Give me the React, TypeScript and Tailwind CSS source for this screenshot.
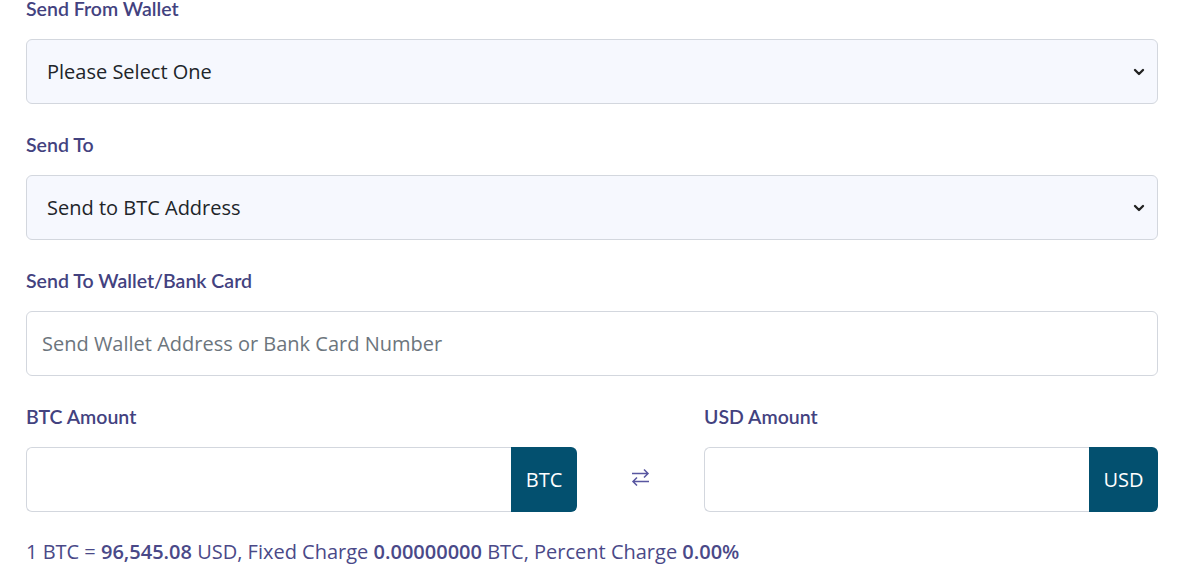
import { ChevronDown } from 'lucide-react';
import type { ReactNode } from 'react';

const label = 'block text-[19.5px] font-semibold text-[#43427f] leading-6 font-["Lato",sans-serif]';
const field = 'h-[65px] w-full rounded-md border border-[#d3d7de] px-5 text-[20px] font-["Open_Sans",sans-serif]';

function Field({ title, children, top }: { title: string; children: ReactNode; top?: string }) {
  return (
    <div className={top}>
      <label className={label}>{title}</label>
      <div className="mt-[18px]">{children}</div>
    </div>
  );
}

function Select({ value }: { value: string }) {
  return (
    <div className={`${field} flex items-center justify-between bg-[#f6f8fe] text-[#212529]`}>
      <span>{value}</span>
      <ChevronDown className="size-4 -mr-[10px] text-[#222]" strokeWidth={3.5} />
    </div>
  );
}

function Amount({ unit, addon }: { unit: string; addon: string }) {
  return (
    <div className="flex h-[65px]">
      <div className="flex-1 rounded-l-md border border-r-0 border-[#d3d7de] bg-white" />
      <div
        className={`${addon} flex items-center justify-center rounded-r-md bg-[#03506f] text-[20px] text-white font-["Open_Sans",sans-serif]`}
      >
        {unit}
      </div>
    </div>
  );
}

function Swap() {
  return (
    <svg width="19" height="18" viewBox="0 0 19 18" fill="none" stroke="#5856a0" strokeWidth="1.5">
      <path d="M1 5.5h16M13 1.5l4 4-4 4" />
      <path d="M18 13.5H2M6 9.5l-4 4 4 4" />
    </svg>
  );
}

export default function App() {
  return (
    <div className="min-h-screen bg-white px-[26px] pr-[31px] -mt-[3px]">
      <Field title="Send From Wallet">
        <Select value="Please Select One" />
      </Field>
      <Field title="Send To" top="mt-[29px]">
        <Select value="Send to BTC Address" />
      </Field>
      <Field title="Send To Wallet/Bank Card" top="mt-[29px]">
        <div className={`${field} flex items-center px-[15px] bg-white text-[#6c757d]`}>
          Send Wallet Address or Bank Card Number
        </div>
      </Field>
      <div className="mt-[29px] grid grid-cols-[551px_1fr_454px]">
        <Field title="BTC Amount">
          <Amount unit="BTC" addon="w-[66px]" />
        </Field>
        <div className="flex items-end justify-center pb-[26px]">
          <Swap />
        </div>
        <Field title="USD Amount">
          <Amount unit="USD" addon="w-[69px]" />
        </Field>
      </div>
      <p className='mt-[25px] text-[20px] text-[#4a4988] font-["Open_Sans",sans-serif]'>
        1 BTC = <b className="font-semibold">96,545.08</b> USD, Fixed Charge{' '}
        <b className="font-semibold">0.00000000</b> BTC, Percent Charge <b className="font-semibold">0.00%</b>
      </p>
    </div>
  );
}
